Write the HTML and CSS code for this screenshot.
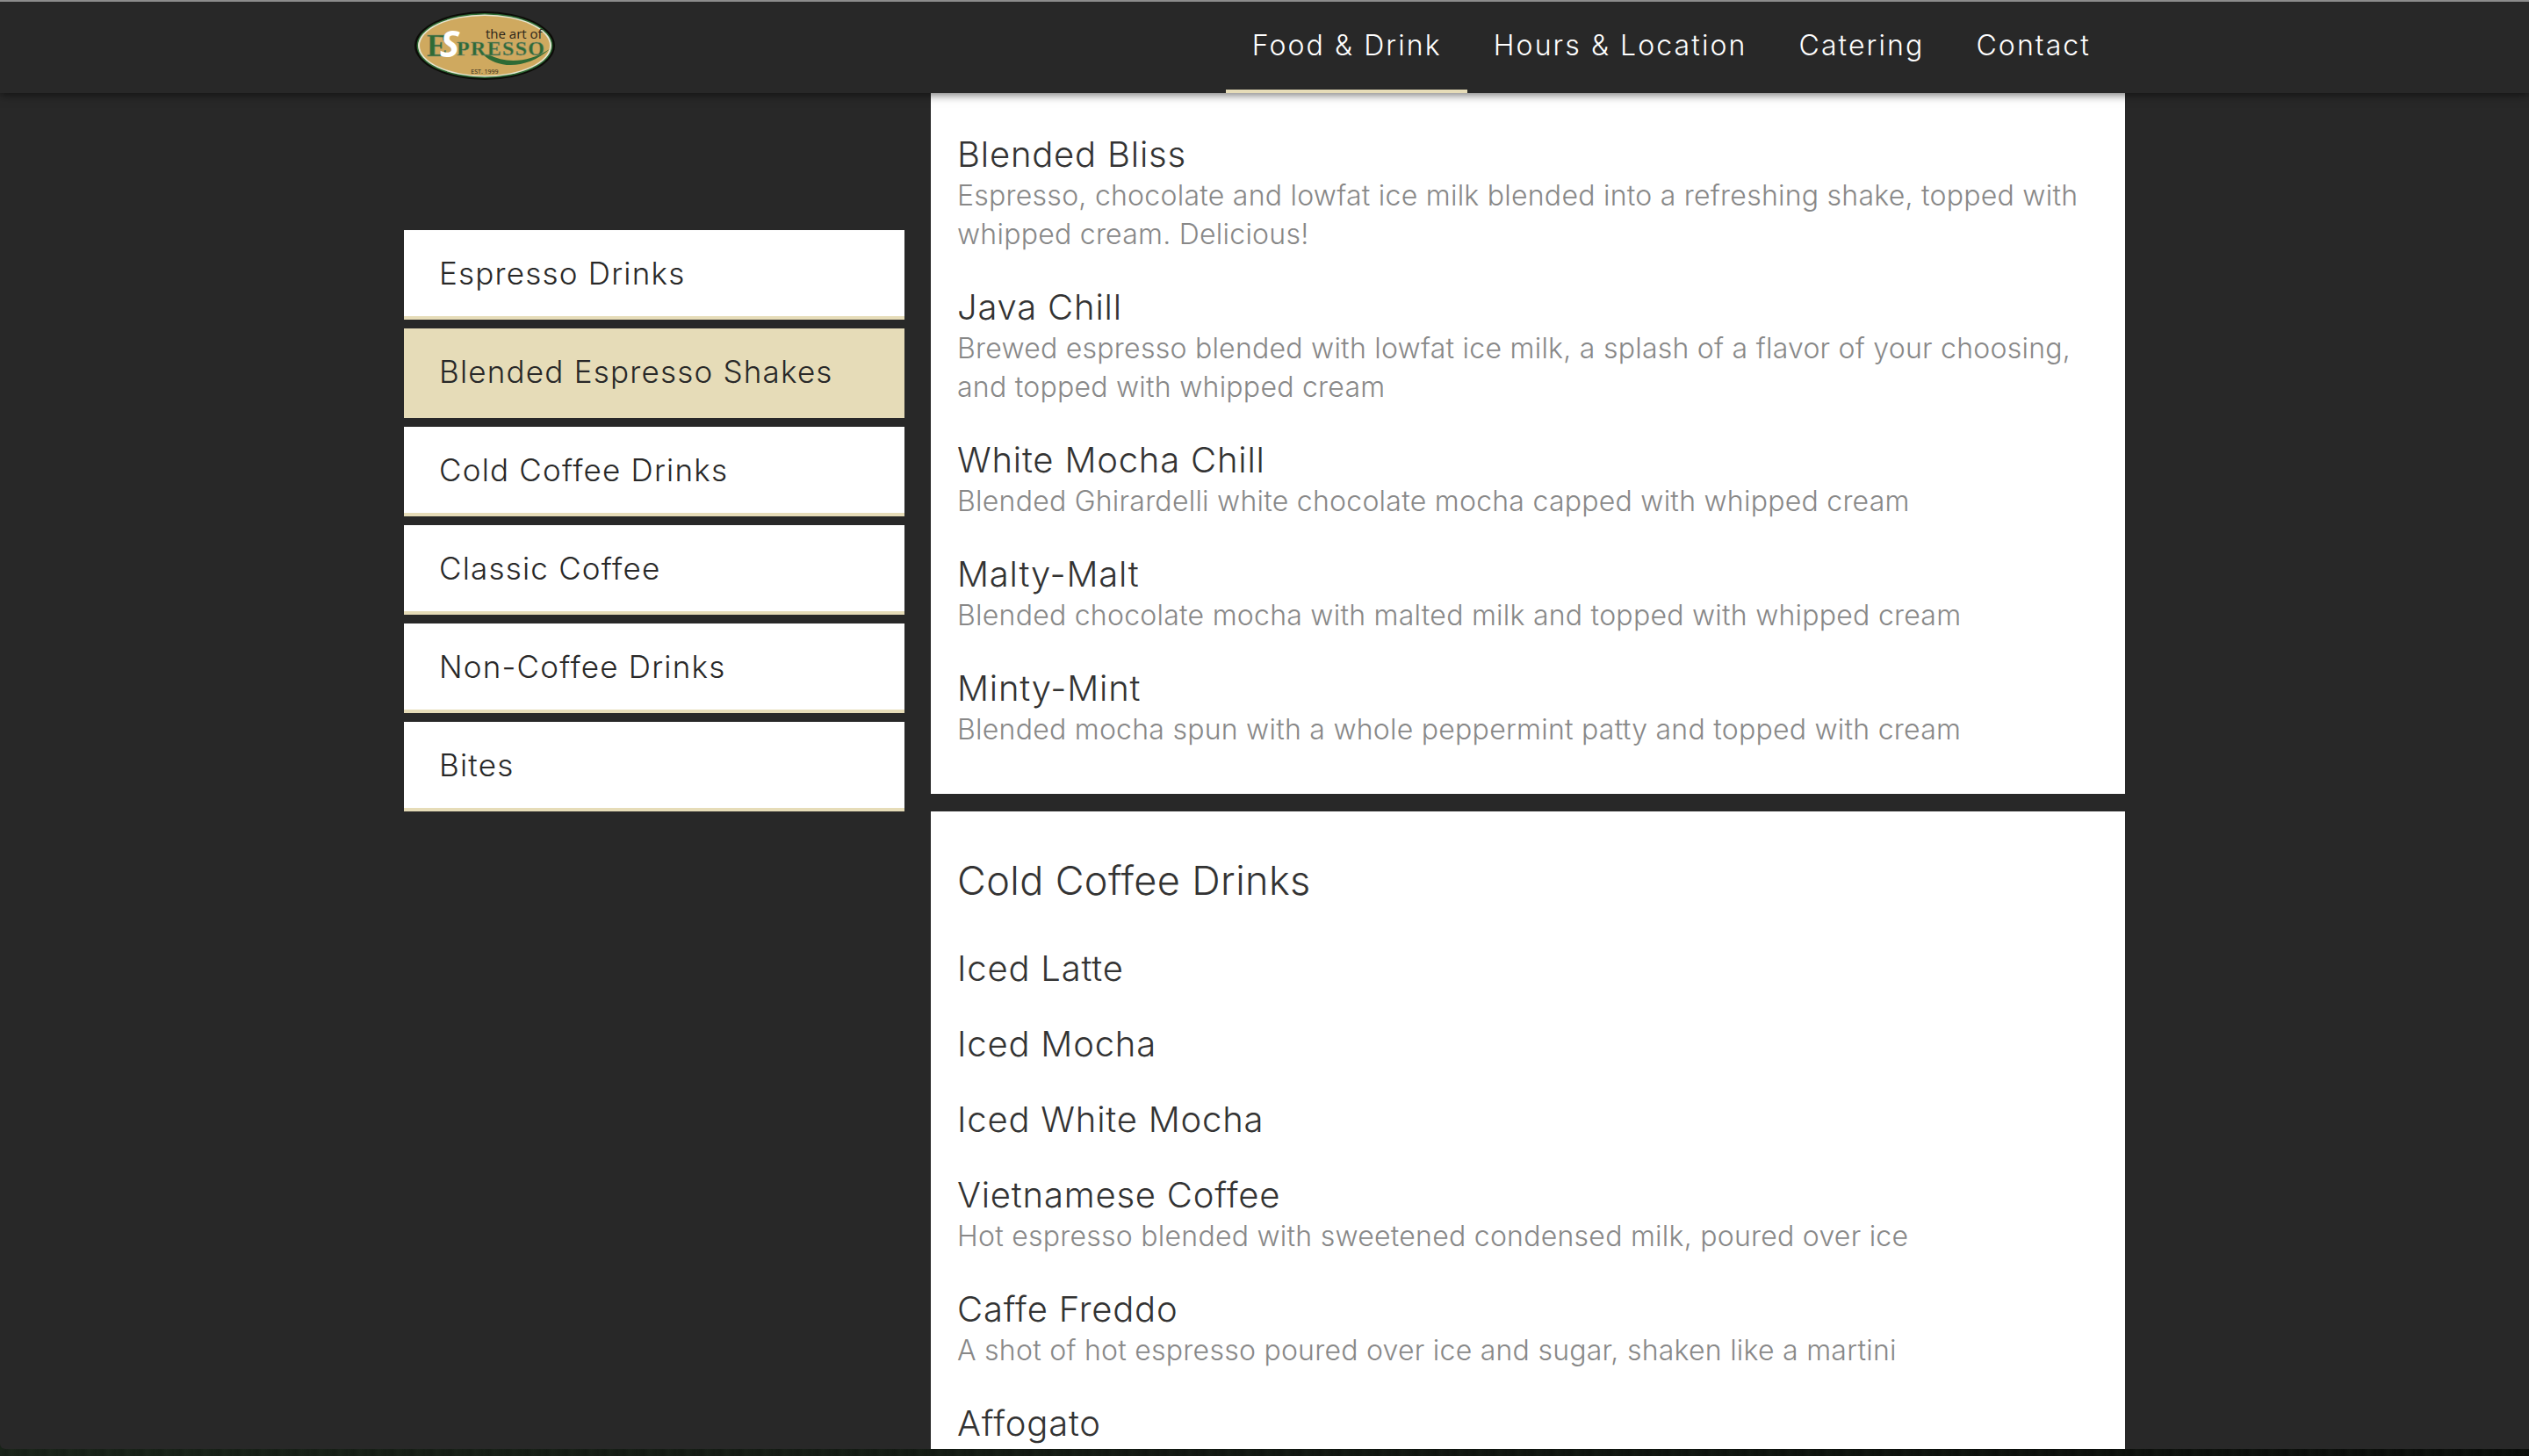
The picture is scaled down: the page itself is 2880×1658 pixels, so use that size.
FILE: index.html
```html
<!DOCTYPE html>
<html lang="en">
<head>
  <meta charset="UTF-8" />
  <meta name="viewport" content="width=device-width, initial-scale=1.0" />
  <title>The Art of Espresso</title>
  <link rel="stylesheet" href="styles.css">
</head>
<body>
  <div class="window">
    <div class="header">
      <a class="logo" href="#">
        <svg width="160" height="78" viewBox="0 0 160 78">
          <ellipse cx="80" cy="39" rx="80" ry="39" fill="#0c0c08"/>
          <ellipse cx="80" cy="39" rx="77.5" ry="37" fill="#2f6b35"/>
          <ellipse cx="80" cy="39" rx="76" ry="35.5" fill="#e6e6d2"/>
          <ellipse cx="80" cy="39" rx="74" ry="34" fill="#cfa95f"/>
          <path d="M78 49 C95 66 128 66 154 43 C130 58 105 60 84 49 Z" fill="#2f6b35"/>
          <text class="logo-art" x="81" y="31">the art of</text>
          <text class="logo-big" x="14" y="51">E</text>
          <text class="logo-rest" x="48" y="50" textLength="100">PRESSO</text>
          <text class="logo-s" x="29" y="52">S</text>
          <text class="logo-est" x="80" y="71">EST. 1999</text>
        </svg>
      </a>
      <div class="nav">
        <a class="nav-link active" href="#">Food &amp; Drink</a>
        <a class="nav-link" href="#">Hours &amp; Location</a>
        <a class="nav-link" href="#">Catering</a>
        <a class="nav-link" href="#">Contact</a>
      </div>
    </div>

    <div class="main">
      <div class="sidebar">
        <a class="side-link" href="#">Espresso Drinks</a>
        <a class="side-link active" href="#">Blended Espresso Shakes</a>
        <a class="side-link" href="#">Cold Coffee Drinks</a>
        <a class="side-link" href="#">Classic Coffee</a>
        <a class="side-link" href="#">Non-Coffee Drinks</a>
        <a class="side-link" href="#">Bites</a>
      </div>

      <div class="menu">
        <div class="panel first">
          <div class="item">
            <h3>Blended Bliss</h3>
            <p>Espresso, chocolate and lowfat ice milk blended into a refreshing shake, topped with whipped cream. Delicious!</p>
          </div>
          <div class="item">
            <h3>Java Chill</h3>
            <p>Brewed espresso blended with lowfat ice milk, a splash of a flavor of your choosing, and topped with whipped cream</p>
          </div>
          <div class="item">
            <h3>White Mocha Chill</h3>
            <p>Blended Ghirardelli white chocolate mocha capped with whipped cream</p>
          </div>
          <div class="item">
            <h3>Malty-Malt</h3>
            <p>Blended chocolate mocha with malted milk and topped with whipped cream</p>
          </div>
          <div class="item">
            <h3>Minty-Mint</h3>
            <p>Blended mocha spun with a whole peppermint patty and topped with cream</p>
          </div>
        </div>

        <div class="panel">
          <h2>Cold Coffee Drinks</h2>
          <div class="item"><h3>Iced Latte</h3></div>
          <div class="item"><h3>Iced Mocha</h3></div>
          <div class="item"><h3>Iced White Mocha</h3></div>
          <div class="item">
            <h3>Vietnamese Coffee</h3>
            <p>Hot espresso blended with sweetened condensed milk, poured over ice</p>
          </div>
          <div class="item">
            <h3>Caffe Freddo</h3>
            <p>A shot of hot espresso poured over ice and sugar, shaken like a martini</p>
          </div>
          <div class="item"><h3>Affogato</h3></div>
        </div>
      </div>
    </div>
  </div>
</body>
</html>
```

FILE: styles.css
```css
* {
  box-sizing: border-box;
}
html, body {
  height: 100%;
}
body {
  margin: 0;
  font-family: Inter, 'Open Sans', sans-serif;
  background-color: #0d100d;
  background-image:
    linear-gradient(90deg, rgba(28, 40, 28, 0.7), rgba(8, 10, 8, 0.7)),
    repeating-linear-gradient(90deg, #141a14 0, #0a0d0a 7px, #1a2119 13px, #0d110d 22px);
  overflow: hidden;
}
a {
  text-decoration: none;
  color: inherit;
}
.window {
  height: 1650px;
  background: #282828;
  border-top: 2px solid #8c8c8c;
  border-bottom-left-radius: 6px;
  display: flex;
  flex-direction: column;
  overflow: hidden;
}
.header {
  height: 104px;
  flex-shrink: 0;
  position: relative;
  z-index: 2;
  display: flex;
  justify-content: space-between;
  align-items: center;
  padding: 0 470px 4px 472px;
  background: #282828;
  box-shadow: 0 2px 10px rgba(0, 0, 0, 0.55);
}
.logo {
  display: flex;
}
.logo text {
  font-family: 'Open Sans', sans-serif;
}
.logo .logo-big, .logo .logo-rest {
  font-family: 'Liberation Serif', serif;
  font-weight: bold;
  fill: #2f6b35;
  stroke: #8a8a70;
  stroke-width: 0.5px;
}
.logo-art {
  font-size: 15px;
  fill: #2a2418;
}
.logo-big {
  font-size: 35px;
}
.logo-rest {
  font-size: 24px;
}
.logo-s {
  font-size: 42px;
  font-weight: bold;
  font-style: italic;
  fill: #fff;
}
.logo-est {
  font-size: 7px;
  fill: #2a2418;
  text-anchor: middle;
}
.nav {
  display: flex;
  align-self: flex-start;
}
.nav-link {
  display: flex;
  align-items: center;
  padding: 0 29px 2px 30px;
  height: 104px;
  font-size: 32px;
  font-weight: 350;
  letter-spacing: 2.1px;
  color: #fff;
  border-bottom: 4px solid transparent;
}
.nav-link.active {
  border-bottom-color: #e6dcb8;
}
.main {
  flex: 1;
  min-height: 0;
  display: flex;
  align-items: flex-start;
  padding-left: 460px;
}
.sidebar {
  width: 570px;
  margin-top: 156px;
  margin-right: 30px;
  display: flex;
  flex-direction: column;
  gap: 10px;
}
.side-link {
  display: flex;
  align-items: center;
  height: 102px;
  padding-left: 40px;
  font-size: 35px;
  font-weight: 350;
  letter-spacing: 1.2px;
  color: #282828;
  background: #fff;
  border-bottom: 4px solid #e6dcb8;
}
.side-link.active {
  background: #e6dcb8;
}
.menu {
  width: 1360px;
  display: flex;
  flex-direction: column;
  gap: 20px;
}
.panel {
  background: #fff;
  padding: 51px 30px 15px;
}
.panel.first {
  padding-top: 45px;
}
h2 {
  margin: 0 0 47px;
  font-size: 45px;
  line-height: 56px;
  font-weight: 350;
  letter-spacing: 0.4px;
  color: #333;
}
h3 {
  margin: 0;
  font-size: 40px;
  line-height: 50px;
  font-weight: 350;
  letter-spacing: 0.8px;
  color: #333;
}
.item {
  margin-bottom: 36px;
}
.item p {
  margin: 0;
  font-size: 32px;
  line-height: 44px;
  font-weight: 300;
  letter-spacing: 0.25px;
  color: #888;
}
```
